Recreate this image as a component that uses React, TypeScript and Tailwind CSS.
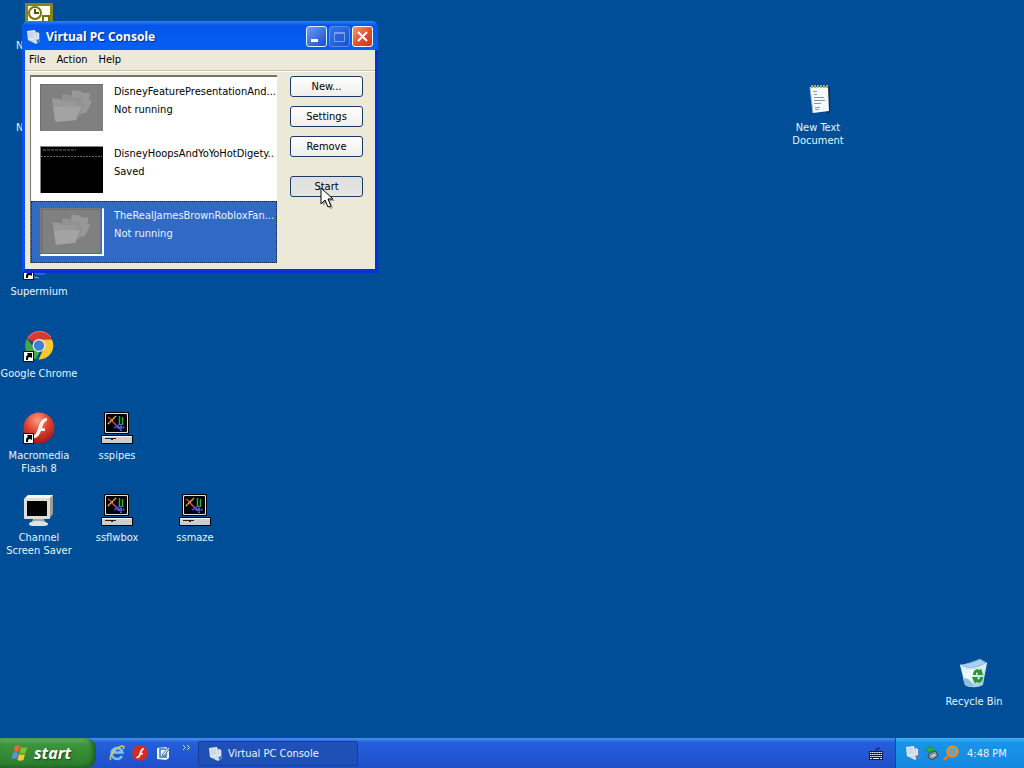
import type { ReactNode } from 'react';

interface Machine {
  name: string;
  status: string;
  screen: 'folders' | 'console';
  selected?: boolean;
}

const machines: Machine[] = [
  { name: 'DisneyFeaturePresentationAnd...', status: 'Not running', screen: 'folders' },
  { name: 'DisneyHoopsAndYoYoHotDigety..', status: 'Saved', screen: 'console' },
  { name: 'TheRealJamesBrownRobloxFan...', status: 'Not running', screen: 'folders', selected: true },
];

function ShortcutArrow() {
  return (
    <g>
      <rect x="0" y="21" width="11" height="11" fill="#111" />
      <rect x="1" y="22" width="9" height="9" fill="#fff" />
      <path d="M3 30v-2c0-2 1-3 2-3l-1-2h5v5l-2-1c-2 0-2 1-2 3z" fill="#000" />
    </g>
  );
}

function OutlookIcon() {
  return (
    <svg width="32" height="32" viewBox="0 0 32 32">
      <rect x="2" y="1" width="28" height="30" fill="#85851c" />
      <rect x="5" y="4" width="22" height="24" fill="#fffff0" />
      <circle cx="12" cy="11" r="6" fill="#fff" stroke="#74740f" strokeWidth="2" />
      <path d="M12 7v4h4" fill="none" stroke="#555500" strokeWidth="2" />
      <path d="M20 20v-6h6v6z" fill="#fff" stroke="#74740f" strokeWidth="2" />
    </svg>
  );
}

function GlobeIcon() {
  return (
    <svg width="32" height="32" viewBox="0 0 32 32">
      <circle cx="17" cy="15" r="12" fill="#2c6fb6" />
      <path d="M6 13c7-6 15-6 22 0" fill="none" stroke="#9fd0f0" strokeWidth="2" />
      <path d="M11 29l5 1" stroke="#7fb0c4" strokeWidth="1" />
      <ShortcutArrow />
    </svg>
  );
}

function ChromeIcon() {
  return (
    <svg width="32" height="32" viewBox="0 0 32 32">
      <path d="M16 15L4 8.500A14 14 0 0 1 29 9.500H16z" fill="#d93a2f" />
      <path d="M16 15V9.500h13A14 14 0 0 1 15.500 29.500L21 18z" fill="#f8ca2c" />
      <path d="M4 8.500L11 18l6 3-4 8.200A14 14 0 0 1 4 8.500z" fill="#42a947" />
      <path d="M5 8a14 14 0 0 1 23-1" fill="none" stroke="#ee7b6c" strokeWidth="1" />
      <circle cx="16" cy="15.500" r="6.500" fill="#f2f2ec" />
      <circle cx="16" cy="15.500" r="5.200" fill="#3d80cc" />
      <ShortcutArrow />
    </svg>
  );
}

function FlashGlyph() {
  return (
    <path
      d="M24 6c-5 0-7 4-8.500 8.500C14 20 12.500 23.500 8.500 24v2.500c6 0 8-3.500 9.500-7.500h4v-2.800h-3c1.200-4 2.500-7 5-7.400z"
      fill="#fff2ec"
    />
  );
}

function FlashIcon() {
  return (
    <svg width="32" height="32" viewBox="0 0 32 32">
      <defs>
        <radialGradient id="flash-ball" cx="45%" cy="25%" r="75%">
          <stop offset="0" stopColor="#ff9a82" />
          <stop offset="0.500" stopColor="#e04430" />
          <stop offset="1" stopColor="#a01a10" />
        </radialGradient>
      </defs>
      <circle cx="16" cy="16" r="15.500" fill="url(#flash-ball)" />
      <FlashGlyph />
      <ShortcutArrow />
    </svg>
  );
}

function MonitorIcon() {
  return (
    <svg width="32" height="32" viewBox="0 0 32 32">
      <path d="M2 4l3-3h25v19l-4 5z" fill="#9b9b98" />
      <path d="M2 4l3-3h25l-3 3z" fill="#f5f5f2" />
      <rect x="1" y="4" width="26" height="21" rx="1" fill="#deded9" />
      <rect x="4" y="7" width="20" height="15" fill="#000" />
      <path d="M10 25h11l1 3H9z" fill="#a6a6a2" />
      <path d="M6 30c0-2 4-3 9-3s10 1 10 3-4 2-10 2-9 0-9-2z" fill="#e2e2dd" />
    </svg>
  );
}

function ScreenSaverIcon() {
  return (
    <svg width="32" height="32" viewBox="0 0 32 32">
      <rect x="3" y="0" width="25" height="22" rx="1" fill="#000" />
      <rect x="4" y="1" width="23" height="20" rx="1" fill="#e0e0de" />
      <rect x="5" y="2" width="21" height="18" rx="1" fill="#000" />
      <path d="M7 5l5 4" stroke="#f04030" strokeWidth="1.500" />
      <path d="M7 12l8-8" stroke="#ecc64a" strokeWidth="1.500" strokeDasharray="2 0.500" />
      <path d="M11 9l8 8" stroke="#d8446c" strokeWidth="1.500" />
      <path d="M13 16l5-3" stroke="#3c4ce0" strokeWidth="1.500" />
      <path d="M18.500 4v9M21.500 5v8" stroke="#2fae3e" strokeWidth="1.500" />
      <path d="M16 15.500h8M20 12v7" stroke="#4262ee" strokeWidth="2" strokeDasharray="1.500 0.500" />
      <rect x="0" y="23" width="32" height="9" fill="#000" />
      <rect x="1" y="24" width="30" height="7" fill="#cdcdca" />
      <rect x="1" y="24" width="30" height="1" fill="#f6f6f4" />
      <path d="M4 26h11v1h-3v1h-2v-1H4z" fill="#222" />
    </svg>
  );
}

function NotepadIcon() {
  return (
    <svg width="32" height="32" viewBox="-2 1 32 32">
      <path d="M8 4h18v25l-2 2z" fill="#1b2b3d" />
      <path d="M6 4h18l1 24-16 2z" fill="#f5f9fa" />
      <path d="M6 4l3 26" stroke="#a8bac6" strokeWidth="1" />
      <path d="M8 2v3M11 2v3M14 2v3M17 2v3M20 2v3M23 2v3" stroke="#b4a95c" strokeWidth="2" />
      <path d="M9 8.500h4M10 11.500h3M10 14.500h10M10 17.500h11M10 20.500h7M11 24.500h5M11 26.500h4" stroke="#8795a0" strokeWidth="1" />
    </svg>
  );
}

function RecycleIcon() {
  return (
    <svg width="32" height="32" viewBox="0 1 32 32">
      <defs>
        <linearGradient id="bin" x1="0" y1="0" x2="1" y2="1">
          <stop offset="0" stopColor="#cfe9fa" />
          <stop offset="0.500" stopColor="#f2faff" />
          <stop offset="1" stopColor="#7fb3dc" />
        </linearGradient>
      </defs>
      <path d="M2 8c7-1 14-4 20-6l7 4-4 22c-5 3-14 3-18 0z" fill="url(#bin)" />
      <path d="M2 8c7-1 14-4 20-6l7 4c-5 5-19 10-27 2z" fill="#79aedd" />
      <path d="M4 8c7-1 13-3 18-5l5 3c-5 3-15 6-23 2z" fill="#a9d2f2" />
      <path d="M2 8c7 6 20 3 27-2" fill="none" stroke="#f8fdff" strokeWidth="1" />
      <path d="M5 22c6-3 8 5 12 7-4 1-8 0-10-1z" fill="#8ebde4" />
      <path d="M15 18c0-5 4-7 7-5l1-2 2 7h-6l1-2c-2-1-2 0-2 2z" fill="#24992f" />
      <path d="M25 20c0 5-4 7-7 5l-1 2-3-7h6l-1 2c2 1 3 0 3-2z" fill="#24992f" />
    </svg>
  );
}

function VirtualPcIcon() {
  return (
    <svg width="16" height="16" viewBox="0 0 16 16" className="shrink-0">
      <path d="M9 2l5 2v8l-4 3-5-3z" fill="#5d7fb4" />
      <path d="M1 2l8-1 2 9-7 2-2-1z" fill="#e9eef4" />
      <path d="M2 3l6-1 1 7-6 1z" fill="#cbd8e8" />
      <path d="M10 3l3 1v6l-2 1z" fill="#e2e8f2" />
      <path d="M4 12l7-2 3 2-4 3z" fill="#d7e0ea" />
      <circle cx="12" cy="12" r="1.500" fill="#3f6fbe" />
    </svg>
  );
}

function WindowsLogo() {
  return (
    <svg width="18" height="18" viewBox="0 0 18 18">
      <path d="M4 2c2-1 4-1 5 0L7.500 8c-2-1-4-1-5 0z" fill="#ee6432" />
      <path d="M10 3c2 1 4 1 6 0l-1.500 6c-2 1-4 1-6 0z" fill="#83bf35" />
      <path d="M2 9c2-1 4-1 5 0l-1.500 6c-2-1-4-1-5 0z" fill="#5a93ee" />
      <path d="M8 10c2 1 4 1 6 0l-1.500 6c-2 1-4 1-6 0z" fill="#f6c834" />
    </svg>
  );
}

function ExplorerIcon() {
  return (
    <svg width="16" height="16" viewBox="0 0 16 16">
      <path d="M13 11a5.500 5.500 0 1 1 .500-3.500H4" fill="none" stroke="#74c6f5" strokeWidth="2.500" />
      <path d="M2 15C-1 12 7 2 13 1c3 0 2 2 1 3" fill="none" stroke="#e6c454" strokeWidth="1.500" />
    </svg>
  );
}

function SmallFlashIcon() {
  return (
    <svg width="16" height="16" viewBox="0 0 32 32">
      <circle cx="16" cy="16" r="15.500" fill="#d92a1c" />
      <FlashGlyph />
    </svg>
  );
}

function ShowDesktopIcon() {
  return (
    <svg width="16" height="16" viewBox="0 0 16 16">
      <path d="M2 3l9-1 3 3v8l-3 2-9-1z" fill="#e8f3fb" />
      <path d="M11 4H5v8h6V8" fill="none" stroke="#3d77b4" strokeWidth="1.500" />
      <path d="M7 10l7-8 1 1-6 8z" fill="#fff" stroke="#326a9f" strokeWidth="1" />
    </svg>
  );
}

function KeyboardIcon() {
  return (
    <svg width="14" height="14" viewBox="0 0 14 14">
      <path d="M7 5V3h3V1" fill="none" stroke="#101c50" strokeWidth="1" />
      <rect x="0" y="5" width="14" height="9" fill="#101c50" />
      <path d="M1 6.500h12M1 8.500h12M1 10.500h12" stroke="#f2f5ff" strokeWidth="1" strokeDasharray="1.500 0.600" />
      <path d="M1 12.500h2M4 12.500h6M11 12.500h2" stroke="#f2f5ff" strokeWidth="1" />
    </svg>
  );
}

function RemoveHardwareIcon() {
  return (
    <svg width="16" height="16" viewBox="0 0 16 16">
      <path d="M5 8l7-2 2 5-6 4-4-3z" fill="#85949a" stroke="#33474e" strokeWidth="1" />
      <path d="M7 11l4-2 1 1-4 2z" fill="#e6edef" />
      <path d="M1 5l6-4v2c3 0 4 2 4 4-1-1-2-1-4-1v2z" fill="#2eb33c" stroke="#137a28" strokeWidth="0.500" />
    </svg>
  );
}

function MagnifierIcon() {
  return (
    <svg width="16" height="16" viewBox="0 0 16 16">
      <path d="M1 15l5-5" stroke="#df7a1e" strokeWidth="3" />
      <circle cx="9.500" cy="6.500" r="5" fill="#4ba9e4" stroke="#e9882c" strokeWidth="2.500" />
      <circle cx="9.500" cy="6.500" r="1.500" fill="#d6843b" />
    </svg>
  );
}

function Cursor() {
  return (
    <svg width="16" height="24" viewBox="0 0 16 24" className="pointer-events-none absolute left-[30px] top-[11px]">
      <path d="M3 3v16l4-4 3 7 3-1-3-7h5z" fill="#000" opacity="0.300" />
      <path d="M1 1v16l4-4 3 7 3-1-3-7h5z" fill="#fff" stroke="#000" strokeWidth="1" />
    </svg>
  );
}

function MachineScreen({ screen, selected }: { screen: Machine['screen']; selected?: boolean }) {
  return (
    <svg
      width="64"
      height="48"
      viewBox="0 0 64 48"
      className={`mt-px shrink-0 ${selected ? 'border-r-2 border-b-2 border-l border-t border-white border-l-[#7b7b7b] border-t-[#7b7b7b]' : ''}`}
    >
      {screen === 'folders' ? (
        <>
          <rect width="63" height="47" fill="#808080" />
          <path d="M32 6l9 1 1 2h8l-1 7 3 1-6 12-16 2z" fill="#989898" />
          <path d="M22 10l8 1 1 2 12 1-1 5 3 1-5 12-17 1z" fill="#929292" />
          <path d="M12 14l8 1 2 2h15l-1 5 5 1-5 13-21 2z" fill="#999" />
          <path d="M13 23l28-1-5 14-20 2z" fill="#a3a3a3" />
          <path d="M0 .500h63M.500 0v47" stroke="#6e6e6e" strokeWidth="1" />
        </>
      ) : (
        <>
          <rect width="63" height="47" fill="#000" />
          <path d="M3 4h33" stroke="#3a3a3a" strokeWidth="2" strokeDasharray="3 1" />
          <path d="M1 10.500h61" stroke="#6a6a6a" strokeWidth="1" strokeDasharray="2 1" />
          <path d="M0 .500h63M.500 0v47" stroke="#858585" strokeWidth="1" />
        </>
      )}
    </svg>
  );
}

function DesktopIcon({ place, icon, children }: { place: string; icon: ReactNode; children?: ReactNode }) {
  return (
    <button type="button" className={`absolute flex w-[78px] flex-col items-center gap-[5px] leading-[13px] text-[#e4f6ff] ${place}`}>
      {icon}
      {children}
    </button>
  );
}

function PushButton({ children, hot }: { children: ReactNode; hot?: boolean }) {
  return (
    <button
      type="button"
      className={`h-[21px] w-full rounded-[3px] border border-[#1c3a66] leading-[19px] ${
        hot ? 'bg-linear-to-b from-[#dedfdf] to-[#e6e6e0]' : 'bg-linear-to-b from-white to-[#efeeea]'
      }`}
    >
      {children}
    </button>
  );
}

function ConsoleWindow() {
  return (
    <section
      aria-label="Virtual PC Console"
      className="absolute left-[22px] top-[21px] w-[356px] rounded-t-[6px] border-x-[3px] border-b-[4px] border-[#0831d9] border-l-[#0c50f0] bg-[#ece9d8]"
    >
      <header className="-mx-[3px] flex h-[29px] items-center rounded-t-[6px] bg-linear-to-b from-[#2b80f8] via-[#0456e8] via-15% to-[#0560f6] pl-[4px] pr-[5px] pt-[2px]">
        <VirtualPcIcon />
        <h1 className="ml-[4px] flex-1 font-['Noto_Sans'] text-[12px] font-bold text-white [text-shadow:1px_1px_1px_#0a2a80]">
          Virtual PC Console
        </h1>
        <div className="flex gap-[2px]">
          <button type="button" aria-label="Minimize" className="size-[21px] rounded-[3px] border border-[#e4eeff] bg-linear-to-br from-[#6f9cf4] to-[#1a48cc]">
            <svg width="19" height="19" viewBox="0 0 19 19">
              <path d="M4 13.500h7" stroke="#fff" strokeWidth="3" />
            </svg>
          </button>
          <button type="button" aria-label="Maximize" disabled className="size-[21px] rounded-[3px] border border-[#5c8cec] bg-linear-to-br from-[#3574ea] to-[#1c50d0]">
            <svg width="19" height="19" viewBox="0 0 19 19">
              <path d="M4.500 5.500h10v9h-10zM4 6.500h10" fill="none" stroke="#779ff0" strokeWidth="1" />
            </svg>
          </button>
          <button type="button" aria-label="Close" className="size-[21px] rounded-[3px] border border-white bg-linear-to-br from-[#ef997c] via-[#df5430] to-[#c53a18]">
            <svg width="19" height="19" viewBox="0 0 19 19">
              <path d="M5 5l9 9M14 5l-9 9" stroke="#fff" strokeWidth="2" />
            </svg>
          </button>
        </div>
      </header>
      <nav className="flex h-[21px] items-center gap-[11px] border-b border-[#c4c0ae] pl-[4px]">
        <button type="button">File</button>
        <button type="button">Action</button>
        <button type="button">Help</button>
      </nav>
      <div className="flex items-start gap-[13px] border-t border-white pb-[6px] pl-[5px] pr-[12px] pt-[3px]">
        <ul className="min-w-0 flex-1 border-l border-t-2 border-[#77756a] bg-white">
          {machines.map((machine) => (
            <li key={machine.name}>
              <button
                type="button"
                aria-pressed={!!machine.selected}
                className={`flex h-[62px] w-full items-start gap-[10px] overflow-hidden border border-dotted pl-[8px] pt-[5px] text-left ${
                  machine.selected ? 'border-[#15203c] bg-[#316ac5] text-[#e6f4ff]' : 'border-white text-black'
                }`}
              >
                <MachineScreen screen={machine.screen} selected={machine.selected} />
                <span className="whitespace-nowrap leading-[18px]">
                  {machine.name}
                  <br />
                  {machine.status}
                </span>
              </button>
            </li>
          ))}
        </ul>
        <div className="flex w-[73px] flex-col gap-[9px] pt-px">
          <PushButton>New...</PushButton>
          <PushButton>Settings</PushButton>
          <PushButton>Remove</PushButton>
          <div className="relative mt-[10px] flex">
            <PushButton hot>Start</PushButton>
            <Cursor />
          </div>
        </div>
      </div>
    </section>
  );
}

function Taskbar() {
  return (
    <footer className="flex h-[30px] items-stretch bg-linear-to-b from-[#4a90f0] via-[#245fdc] via-15% to-[#1f4fc8] text-white">
      <button
        type="button"
        className="flex w-[96px] items-center gap-[5px] rounded-r-[10px] bg-linear-to-b from-[#6db36b] via-[#3c963c] via-20% to-[#2c7a2d] pl-[11px] shadow-[inset_-3px_-1px_4px_#1c5c22]"
      >
        <WindowsLogo />
        <span className="font-['Noto_Sans'] text-[16px] font-bold italic leading-[20px] [text-shadow:1px_1px_2px_#163c16]">start</span>
      </button>
      <div className="flex w-[102px] items-center gap-[7px] pl-[13px]">
        <button type="button" aria-label="Internet Explorer"><ExplorerIcon /></button>
        <button type="button" aria-label="Flash"><SmallFlashIcon /></button>
        <button type="button" aria-label="Show Desktop"><ShowDesktopIcon /></button>
        <button type="button" aria-label="More" className="self-start pl-[4px] pt-[6px]">
          <svg width="9" height="7" viewBox="0 0 9 7">
            <path d="M1 1l2.500 2.500L1 6M5 1l2.500 2.500L5 6" fill="none" stroke="#c7dcff" strokeWidth="1" />
          </svg>
        </button>
      </div>
      <button
        type="button"
        className="mb-[2px] mt-[3px] flex w-[160px] items-center gap-[4px] rounded-[2px] border border-[#163f9c] bg-[#1e50b8] pl-[9px] text-[#e8f5ff]"
      >
        <VirtualPcIcon />
        <span className="pt-[2px]">Virtual PC Console</span>
      </button>
      <div className="ml-auto flex items-center pr-[12px]">
        <KeyboardIcon />
      </div>
      <div className="flex w-[129px] items-center gap-[3px] border-l border-[#0c4aa8] bg-linear-to-b from-[#3fb4f8] via-[#1894e8] via-15% to-[#1688e0] pl-[9px] text-[#e8f7ff]">
        <VirtualPcIcon />
        <RemoveHardwareIcon />
        <MagnifierIcon />
        <time className="ml-[5px] pt-[2px]">4:48 PM</time>
      </div>
    </footer>
  );
}

export default function App() {
  return (
    <div className="flex min-h-screen flex-col bg-[#004e98] font-['DejaVu_Sans_Condensed','Noto_Sans',sans-serif] text-[11px]">
      <main className="relative flex-1 overflow-hidden">
        <DesktopIcon place="left-0 top-[2px]" icon={<OutlookIcon />}>
          <span className="self-start pl-[16px]">N</span>
        </DesktopIcon>
        <DesktopIcon place="left-0 top-[84px]" icon={<GlobeIcon />}>
          <span className="self-start pl-[16px]">N</span>
        </DesktopIcon>
        <DesktopIcon place="left-0 top-[248px]" icon={<GlobeIcon />}>Supermium</DesktopIcon>
        <DesktopIcon place="left-0 top-[330px]" icon={<ChromeIcon />}>Google Chrome</DesktopIcon>
        <DesktopIcon place="left-0 top-[412px]" icon={<FlashIcon />}><span>Macromedia<br />Flash 8</span></DesktopIcon>
        <DesktopIcon place="left-0 top-[494px]" icon={<MonitorIcon />}><span>Channel<br />Screen Saver</span></DesktopIcon>
        <DesktopIcon place="left-[78px] top-[412px]" icon={<ScreenSaverIcon />}>sspipes</DesktopIcon>
        <DesktopIcon place="left-[78px] top-[494px]" icon={<ScreenSaverIcon />}>ssflwbox</DesktopIcon>
        <DesktopIcon place="left-[156px] top-[494px]" icon={<ScreenSaverIcon />}>ssmaze</DesktopIcon>
        <DesktopIcon place="right-[167px] top-[84px]" icon={<NotepadIcon />}><span>New Text<br />Document</span></DesktopIcon>
        <DesktopIcon place="right-[11px] bottom-[30px]" icon={<RecycleIcon />}>Recycle Bin</DesktopIcon>
        <ConsoleWindow />
      </main>
      <Taskbar />
    </div>
  );
}
